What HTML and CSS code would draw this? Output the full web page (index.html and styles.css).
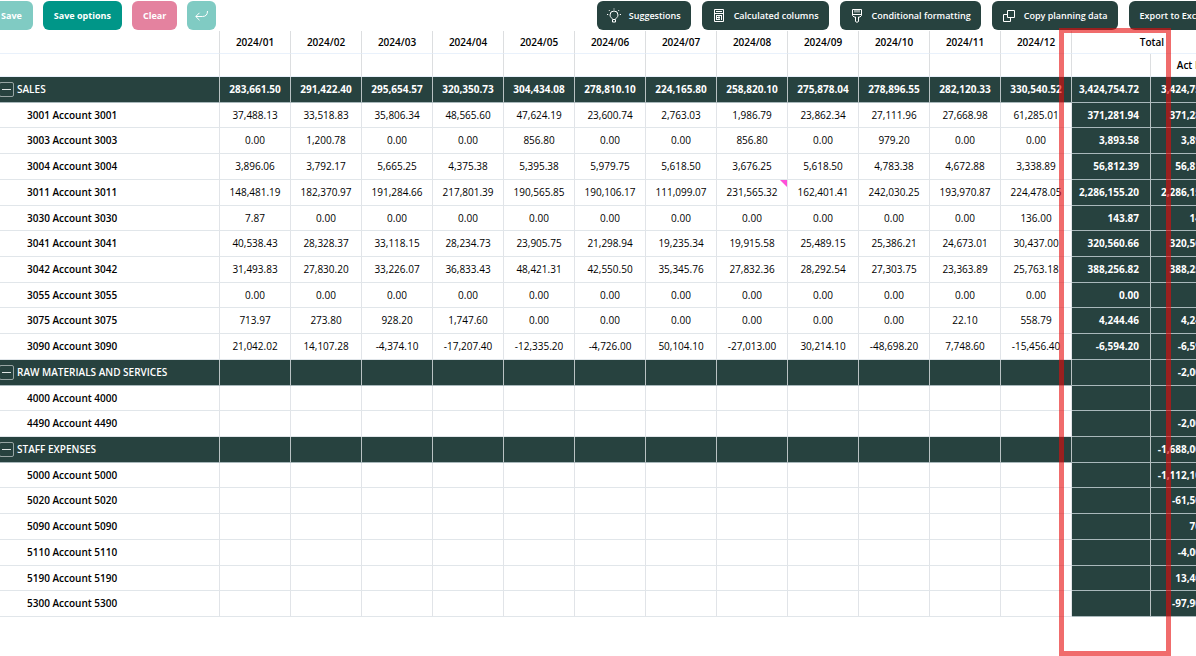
FILE: index.html
```
<!DOCTYPE html>
<html lang="en">
<head>
<meta charset="utf-8">
<title>Planning</title>
<link rel="stylesheet" href="styles.css">
</head>
<body>
<main class="planner">
<div class="toolbar">
<div class="group">
<button class="btn soft">Save</button>
<button class="btn primary">Save options</button>
<button class="btn danger">Clear</button>
<button class="btn soft square" aria-label="Undo"><svg width="15" height="15" viewBox="0 0 15 15"><path d="M13.500 3c0 3.600-1.600 5.500-5 5.500H1.800M5.500 4.800L1.800 8.500l3.700 3.700"/></svg></button>
</div>
<div class="group">
<button class="btn dark"><svg width="16" height="16" viewBox="0 0 16 16"><path d="M6.500 11.500c0-1.500-2.500-2-2.500-4.500a4 4 0 0 1 8 0c0 2.500-2.500 3-2.500 4.500zM6.500 12v2h3v-2M8 .5v1M2.800 2l.9.900M13.200 2l-.9.900M1 6.500h1.200M13.800 6.500H15"/></svg>Suggestions</button>
<button class="btn dark"><svg width="16" height="16" viewBox="0 0 16 16"><path d="M3.500 1.500h9v12h-9zM3.500 5.500h9M5 3.500h6M5.500 7v5M8 7v5M10.500 7v5M5 7.500h6M5 9.500h4M5 11.500h4"/></svg>Calculated columns</button>
<button class="btn dark"><svg width="16" height="16" viewBox="0 0 16 16"><path d="M3.500 1.500h9v6l-1.500 1.500H9.500v4.500l-1.500.8-1.500-.8V9H5L3.500 7.500zM3.500 6.500h9M6 1.500v3M8 1.500v3M10 1.500v3"/></svg>Conditional formatting</button>
<button class="btn dark"><svg width="16" height="16" viewBox="0 0 16 16"><path d="M6.500 2.500h7v7h-7zM6 6.500H2.500v7h7V10"/></svg>Copy planning data</button>
<button class="btn dark text-only">Export to Excel</button>
</div>
</div>
<div class="sheet">
<table id="grid">
<colgroup><col class="c-name"><col class="c-month" span="12"><col class="c-total"><col class="c-act"></colgroup>
<thead></thead>
<tbody></tbody>
</table>
</div>
<div class="marker"></div>
</main>
<script src="app.js"></script>
</body>
</html>
```
FILE: styles.css
```
* { box-sizing: border-box; }
body {
  margin: 0;
  background: #fff;
  color: #000;
  font-family: "Open Sans", "Noto Sans", sans-serif;
  font-size: 10px;
  line-height: 16px;
  overflow: hidden;
}
.planner { position: relative; min-height: 100vh; overflow: hidden; }
.toolbar {
  display: flex;
  justify-content: space-between;
  padding: 1px 0;
}
.group { display: flex; align-items: flex-start; gap: 10px; flex: none; }
.group:first-child { margin-left: -10px; }
.group:last-child { gap: 11px; margin-right: -19px; }
.btn {
  display: flex;
  align-items: center;
  gap: 7px;
  height: 29px;
  padding: 0 11px;
  border: 0;
  border-radius: 6px;
  color: #fff;
  font: 700 9px/16px "Open Sans", "Noto Sans", sans-serif;
  white-space: nowrap;
}
.btn svg { fill: none; stroke: currentColor; stroke-width: 1; }
.soft { background: #80cbc3; }
.primary { background: #009688; }
.danger { background: #e4829f; }
.dark { background: #27423f; padding: 0 10px 0 9px; font-weight: 600; }
.text-only { padding: 0 11px; }
.square { padding: 0 7px; }
table {
  border-collapse: separate;
  border-spacing: 0;
  table-layout: fixed;
  width: 1233px;
}
.c-name { width: 220px; }
.c-month { width: 71px; }
.c-total { width: 79px; }
.c-act { width: 82px; }
th, td {
  padding: 0;
  text-align: center;
  white-space: nowrap;
  border-right: 1px solid #e1e4e8;
  border-bottom: 1px solid #e1e6ea;
}
th { font-weight: 600; }
thead th { height: 23px; border-bottom-color: #e9f1fb; border-right-color: #dcdee0; }
tbody tr { height: 26px; }
tbody tr:nth-child(7n+2), tbody tr:nth-child(7n+6) { height: 25px; }
tbody th, tbody td { padding-bottom: 1px; }
tbody th { padding-left: 27px; text-align: left; font-weight: 600; }
.head th { padding-left: 0; }
.head th, .head td, .sum {
  background: #27423f;
  color: #fff;
  font-weight: 700;
  border-right-color: #b9c2c3;
  border-bottom-color: #a9b8bb;
}
.head th { font-weight: 600; }
.label { display: flex; align-items: flex-end; gap: 3px; }
.toggle {
  width: 15px;
  height: 15px;
  margin-left: -1px;
  padding: 0 2px;
  display: flex;
  align-items: center;
  background: none;
  border: 1px solid #98a5a4;
  border-radius: 2px;
}
.toggle::before { content: ""; flex: 1; height: 1px; background: #dfe4e4; }
tbody .sum { text-align: right; padding-right: 11px; }
.note { position: relative; }
.note::after {
  content: "";
  position: absolute;
  top: 0;
  right: 0;
  border-top: 7px solid #ff4fd8;
  border-left: 7px solid transparent;
}
.marker {
  position: absolute;
  left: 1059px;
  top: 28px;
  bottom: 0;
  width: 112px;
  border: 5px solid rgba(230, 10, 10, .6);
}
```
FILE: app.js
```
const rows = [
  ["SALES", "283,661.50 291,422.40 295,654.57 320,350.73 304,434.08 278,810.10 224,165.80 258,820.10 275,878.04 278,896.55 282,120.33 330,540.52", "3,424,754.72", "3,424,754.72", true],
  ["3001 Account 3001", "37,488.13 33,518.83 35,806.34 48,565.60 47,624.19 23,600.74 2,763.03 1,986.79 23,862.34 27,111.96 27,668.98 61,285.01", "371,281.94", "371,281.94"],
  ["3003 Account 3003", "0.00 1,200.78 0.00 0.00 856.80 0.00 0.00 856.80 0.00 979.20 0.00 0.00", "3,893.58", "3,893.58"],
  ["3004 Account 3004", "3,896.06 3,792.17 5,665.25 4,375.38 5,395.38 5,979.75 5,618.50 3,676.25 5,618.50 4,783.38 4,672.88 3,338.89", "56,812.39", "56,812.39"],
  ["3011 Account 3011", "148,481.19 182,370.97 191,284.66 217,801.39 190,565.85 190,106.17 111,099.07 231,565.32 162,401.41 242,030.25 193,970.87 224,478.05", "2,286,155.20", "2,286,155.20"],
  ["3030 Account 3030", "7.87 0.00 0.00 0.00 0.00 0.00 0.00 0.00 0.00 0.00 0.00 136.00", "143.87", "143.87"],
  ["3041 Account 3041", "40,538.43 28,328.37 33,118.15 28,234.73 23,905.75 21,298.94 19,235.34 19,915.58 25,489.15 25,386.21 24,673.01 30,437.00", "320,560.66", "320,560.66"],
  ["3042 Account 3042", "31,493.83 27,830.20 33,226.07 36,833.43 48,421.31 42,550.50 35,345.76 27,832.36 28,292.54 27,303.75 23,363.89 25,763.18", "388,256.82", "388,256.82"],
  ["3055 Account 3055", "0.00 0.00 0.00 0.00 0.00 0.00 0.00 0.00 0.00 0.00 0.00 0.00", "0.00", "0.00"],
  ["3075 Account 3075", "713.97 273.80 928.20 1,747.60 0.00 0.00 0.00 0.00 0.00 0.00 22.10 558.79", "4,244.46", "4,244.46"],
  ["3090 Account 3090", "21,042.02 14,107.28 -4,374.10 -17,207.40 -12,335.20 -4,726.00 50,104.10 -27,013.00 30,214.10 -48,698.20 7,748.60 -15,456.40", "-6,594.20", "-6,594.20"],
  ["RAW MATERIALS AND SERVICES", "", "", "-2,000.00", true],
  ["4000 Account 4000", "", "", ""],
  ["4490 Account 4490", "", "", "-2,000.00"],
  ["STAFF EXPENSES", "", "", "-1,688,000.00", true],
  ["5000 Account 5000", "", "", "-1,112,100.00"],
  ["5020 Account 5020", "", "", "-61,500.00"],
  ["5090 Account 5090", "", "", "700.00"],
  ["5110 Account 5110", "", "", "-4,000.00"],
  ["5190 Account 5190", "", "", "13,400.00"],
  ["5300 Account 5300", "", "", "-97,900.00"]
];
const months = Array.from({ length: 12 }, (_, i) => "2024/" + String(i + 1).padStart(2, "0"));
document.querySelector("#grid thead").innerHTML =
  "<tr><th></th>" + months.map(m => `<th scope="col">${m}</th>`).join("") + '<th colspan="2" scope="colgroup">Total</th></tr>' +
  "<tr>" + "<th></th>".repeat(14) + '<th scope="col">Act LY</th></tr>';
document.querySelector("#grid tbody").innerHTML = rows.map(([name, values, total, act, head]) => {
  const list = values ? values.split(" ") : Array(12).fill("");
  const label = head ? `<div class="label"><button class="toggle" aria-label="Collapse ${name}"></button>${name}</div>` : name;
  const cells = list.map((v, i) => `<td${name.startsWith("3011") && i === 7 ? ' class="note"' : ""}>${v}</td>`).join("");
  return `<tr${head ? ' class="head"' : ""}><th scope="row">${label}</th>${cells}<td class="sum">${total}</td><td class="sum">${act}</td></tr>`;
}).join("");
```
